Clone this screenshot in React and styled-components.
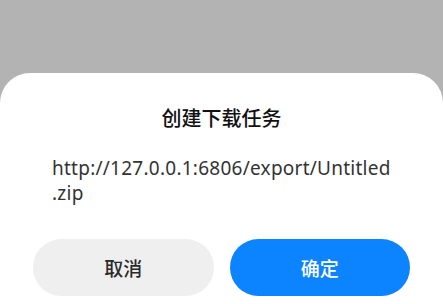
import React from "react";
import styled, { createGlobalStyle } from "styled-components";

const GlobalStyle = createGlobalStyle`
  html, body {
    margin: 0;
    padding: 0;
    background: #b3b3b3;
  }
  body {
    font-family: "Noto Sans", "Noto Sans CJK SC", sans-serif;
  }
`;

const Backdrop = styled.div`
  height: 304px;
  padding-top: 73px;
  box-sizing: border-box;
  display: flex;
  flex-direction: column;
  overflow: hidden;
`;

const Sheet = styled.div`
  flex: 1;
  background: #ffffff;
  border-radius: 30px 30px 0 0;
  padding: 31px 33px 0;
  display: flex;
  flex-direction: column;
`;

const Title = styled.h2`
  margin: 0;
  text-align: center;
  font-family: "Noto Sans CJK SC", sans-serif;
  font-size: 20px;
  line-height: 28px;
  font-weight: 500;
  color: #111111;
`;

const Message = styled.p`
  margin: 24px 0 0;
  padding: 0 9px 0 19px;
  font-size: 19px;
  line-height: 25px;
  letter-spacing: 0.25px;
  color: #333333;
  overflow-wrap: anywhere;
`;

const Actions = styled.div`
  margin-top: 33px;
  display: grid;
  grid-template-columns: 1fr 1fr;
  gap: 16px;
`;

const Button = styled.button`
  height: 57px;
  border: none;
  border-radius: 29px;
  font-family: "Noto Sans CJK SC", sans-serif;
  font-size: 19px;
  font-weight: 500;
  background: ${(p) => (p.$primary ? "#0d84ff" : "#efefef")};
  color: ${(p) => (p.$primary ? "#ffffff" : "#2a2a2a")};
  cursor: pointer;
`;

export default function App() {
  return (
    <>
      <GlobalStyle />
      <Backdrop>
        <Sheet>
          <Title>创建下载任务</Title>
          <Message>
            http://127.0.0.1:6806/export/Untitled<wbr />.zip
          </Message>
          <Actions>
            <Button>取消</Button>
            <Button $primary>确定</Button>
          </Actions>
        </Sheet>
      </Backdrop>
    </>
  );
}
